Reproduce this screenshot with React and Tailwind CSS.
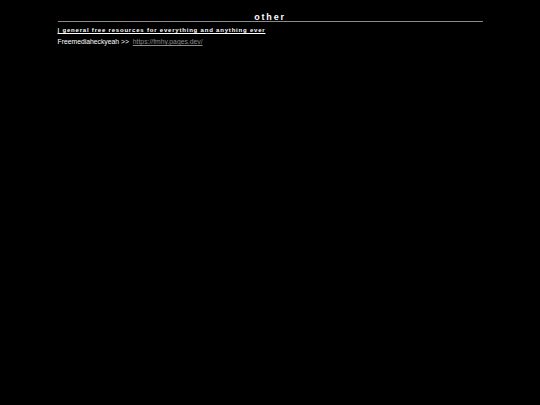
import React from "react";

const App = () => {
  return (
    <div
      className="min-h-screen w-full bg-black text-white"
      style={{ fontFamily: '"Liberation Sans", Arial, sans-serif' }}
    >
      <div className="mx-auto w-[425px] pt-[13px]">
        <h1 className="border-b border-[#8a8a8a] text-center text-[9px] font-bold leading-[8px] tracking-[1.8px]">
          other
        </h1>
        <h2 className="mt-[4px] text-[6px] font-bold leading-[9px] tracking-[0.8px] underline">
          | general free resources for everything and anything ever
        </h2>
        <p className="mt-[2px] text-[6.8px] leading-[10px]">
          Freemediaheckyeah &gt;&gt;{" "}
          <a href="#" className="ml-[2px] text-[#8c8c8c] underline">
            https://fmhy.pages.dev/
          </a>
        </p>
      </div>
    </div>
  );
};

export default App;
